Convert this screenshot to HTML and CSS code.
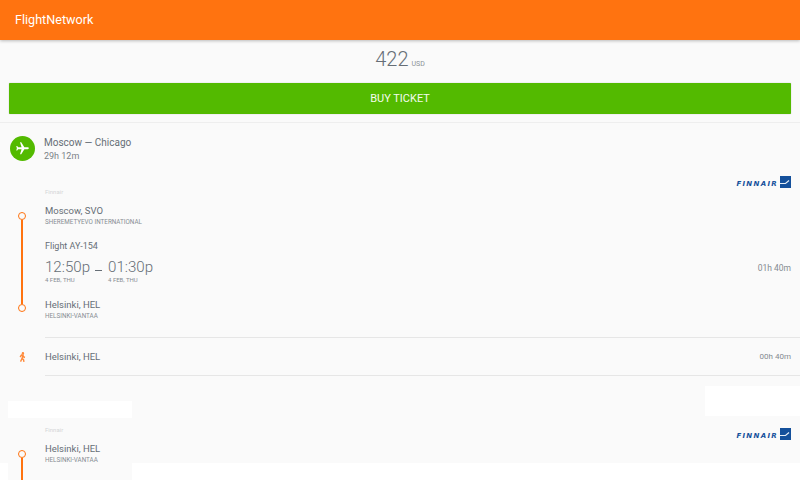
FILE: index.html
```html
<!DOCTYPE html>
<html lang="en">
<head>
    <meta charset="UTF-8">
    <meta name="viewport" content="width=device-width, initial-scale=1.0">
    <title>FlightNetwork</title>
    <link rel="stylesheet" href="styles.css">
</head>
<body>
    <div class="app-bar">FlightNetwork</div>

    <div class="price-box">
        <div class="price"><span class="price-value">422</span><span class="price-currency">USD</span></div>
        <button class="buy-btn">BUY TICKET</button>
    </div>

    <div class="route">
        <div class="route-icon">
            <svg width="15" height="15" viewBox="0 0 24 24"><path fill="#fff" d="M21 16v-2l-8-5V3.500C13 2.670 12.330 2 11.500 2S10 2.670 10 3.500V9l-8 5v2l8-2.500V19l-2 1.500V22l3.500-1 3.500 1v-1.500L13 19v-5.500l8 2.500z" transform="rotate(90 12 12)"/></svg>
        </div>
        <div>
            <div class="route-title">Moscow — Chicago</div>
            <div class="route-time">29h 12m</div>
        </div>
    </div>

    <div class="segment">
        <div class="carrier-row">
            <span class="carrier-name">Finnair</span>
            <span class="logo">
                <span class="logo-text">FINNAIR</span>
                <svg width="11" height="12" viewBox="0 0 11 12"><rect width="11" height="12" fill="#14509b"/><path fill="none" stroke="#e4edf6" stroke-width="1.200" d="M0 7.500h5.500L9 4.500"/></svg>
            </span>
        </div>
        <div class="leg">
            <div class="timeline"><span class="dot"></span><span class="line"></span><span class="dot"></span></div>
            <div class="leg-info">
                <div class="city">Moscow, SVO</div>
                <div class="airport">SHEREMETYEVO INTERNATIONAL</div>
                <div class="flight-no">Flight AY-154</div>
                <div class="times">
                    <div class="time-block">
                        <div class="time">12:50p</div>
                        <div class="date">4 FEB, THU</div>
                    </div>
                    <div class="time-dash"></div>
                    <div class="time-block">
                        <div class="time">01:30p</div>
                        <div class="date">4 FEB, THU</div>
                    </div>
                    <div class="duration">01h 40m</div>
                </div>
                <div class="city city-end">Helsinki, HEL</div>
                <div class="airport">HELSINKI-VANTAA</div>
            </div>
        </div>
        <div class="layover">
            <svg class="walk" width="7" height="10" viewBox="0 0 10 12" preserveAspectRatio="none"><circle cx="5.600" cy="1.500" r="1.600" fill="#ff8a3a"/><path fill="none" stroke="#ff8a3a" stroke-width="2" d="M1.500 6l2-2.200h2.200l-1.500 4.200-2 3.500M4.700 8l1.800 1.300.6 2.500M5.700 4l.8 1.800 2 .7"/></svg>
            <div class="layover-info">
                <span class="city">Helsinki, HEL</span>
                <span class="layover-time">00h 40m</span>
            </div>
        </div>
    </div>

    <div class="segment segment-next">
        <div class="carrier-row">
            <span class="carrier-name">Finnair</span>
            <span class="logo">
                <span class="logo-text">FINNAIR</span>
                <svg width="11" height="12" viewBox="0 0 11 12"><rect width="11" height="12" fill="#14509b"/><path fill="none" stroke="#e4edf6" stroke-width="1.200" d="M0 7.500h5.500L9 4.500"/></svg>
            </span>
        </div>
        <div class="leg">
            <div class="timeline"><span class="dot"></span><span class="line line-short"></span></div>
            <div class="leg-info">
                <div class="city">Helsinki, HEL</div>
                <div class="airport">HELSINKI-VANTAA</div>
            </div>
        </div>
    </div>

    <!-- white blocks left over in the list -->
    <div class="patch patch-a"></div>
    <div class="patch patch-b"></div>
    <div class="patch patch-c"></div>
    <div class="patch patch-d"></div>
</body>
</html>
```

FILE: styles.css
```css
* {
    margin: 0;
    padding: 0;
    box-sizing: border-box;
}

html, body {
    height: 100%;
    overflow: hidden;
}

body {
    position: relative;
    font-family: 'Roboto', sans-serif;
    background: #fafafa;
    color: #666e76;
}

.app-bar {
    height: 40px;
    padding-left: 15px;
    background: #ff7310;
    color: white;
    font-size: 12.600px;
    line-height: 40px;
    box-shadow: 0 1px 3px rgba(0,0,0,0.25);
}

.price-box {
    height: 83px;
    padding: 0 9px;
    border-bottom: 1px solid #eee;
}

.price {
    height: 43px;
    padding-top: 7px;
    display: flex;
    justify-content: center;
    align-items: baseline;
    gap: 3px;
}

.price-value {
    font-size: 20px;
    font-weight: 300;
    line-height: 24px;
}

.price-currency {
    font-size: 7px;
    color: #8a9096;
}

.buy-btn {
    display: block;
    width: 100%;
    height: 31px;
    background: #53ba00;
    color: #f4fbee;
    border: none;
    border-radius: 1px;
    font-family: inherit;
    font-size: 11px;
    box-shadow: 0 0 1px rgba(0,0,0,0.4);
}

.route {
    display: flex;
    align-items: center;
    gap: 9px;
    height: 50px;
    padding-left: 10px;
}

.route-icon {
    width: 25px;
    height: 25px;
    border-radius: 50%;
    background: #53ba00;
    display: flex;
    align-items: center;
    justify-content: center;
}

.route-title {
    font-size: 10px;
    line-height: 14px;
    padding-top: 1px;
}

.route-time {
    font-size: 9px;
    line-height: 12px;
    color: #7b8288;
}

.carrier-row {
    display: flex;
    justify-content: space-between;
    align-items: flex-start;
    height: 31px;
    padding: 0 9px 0 45px;
}

.carrier-name {
    font-size: 6px;
    line-height: 8px;
    color: #d4d6d8;
    margin-top: 15px;
}

.logo {
    display: flex;
    align-items: flex-end;
    gap: 2px;
    margin-top: 3px;
}

.segment-next .logo {
    margin-top: 17px;
}

.logo-text {
    font-family: 'DejaVu Sans', sans-serif;
    font-size: 7px;
    line-height: 7px;
    font-weight: bold;
    font-style: italic;
    letter-spacing: 1.300px;
    color: #14509b;
}

.leg {
    display: flex;
}

.timeline {
    width: 44px;
    margin-right: 1px;
    padding-top: 8px;
    flex-shrink: 0;
    display: flex;
    flex-direction: column;
    align-items: center;
}

.dot {
    width: 8px;
    height: 8px;
    border: 1.500px solid #ff7310;
    border-radius: 50%;
    flex-shrink: 0;
}

.line {
    width: 2px;
    height: 84px;
    background: #ff7310;
}

.line-short {
    height: 22px;
}

.leg-info {
    flex: 1;
    padding-right: 9px;
}

.city {
    font-size: 9.500px;
    line-height: 13px;
}

.airport {
    font-size: 6.300px;
    line-height: 9px;
    margin-top: 1px;
    color: #878d93;
}

.flight-no {
    font-size: 9px;
    line-height: 12px;
    margin-top: 13px;
}

.times {
    display: flex;
    align-items: flex-start;
    margin-top: 6px;
}

.time {
    font-size: 15.100px;
    font-weight: 300;
    line-height: 18px;
}

.date {
    font-size: 6px;
    line-height: 8px;
    color: #878d93;
}

.time-dash {
    width: 7px;
    height: 1px;
    margin: 12px 6px 0 5px;
    background: #666e76;
}

.duration {
    margin-left: auto;
    padding-top: 5px;
    font-size: 8.500px;
    color: #858b91;
}

.city-end {
    margin-top: 14px;
}

.layover {
    display: flex;
    align-items: center;
    height: 39px;
    margin-top: 16px;
}

.walk {
    margin-left: 19px;
    margin-right: 19px;
    flex-shrink: 0;
}

.layover-info {
    flex: 1;
    display: flex;
    justify-content: space-between;
    align-items: center;
    height: 39px;
    padding-right: 9px;
    border-top: 1px solid #e6e6e6;
    border-bottom: 1px solid #e6e6e6;
}

.layover-time {
    font-size: 8px;
    color: #858b91;
}

.segment-next {
    margin-top: 35px;
}

.patch {
    position: absolute;
    background: white;
}

.patch-a {
    left: 8px;
    top: 401px;
    width: 124px;
    height: 17px;
}

.patch-b {
    left: 705px;
    top: 386px;
    width: 95px;
    height: 30px;
}

.patch-c {
    left: 0;
    top: 463px;
    width: 8px;
    height: 17px;
}

.patch-d {
    left: 132px;
    top: 463px;
    width: 668px;
    height: 17px;
}
```
